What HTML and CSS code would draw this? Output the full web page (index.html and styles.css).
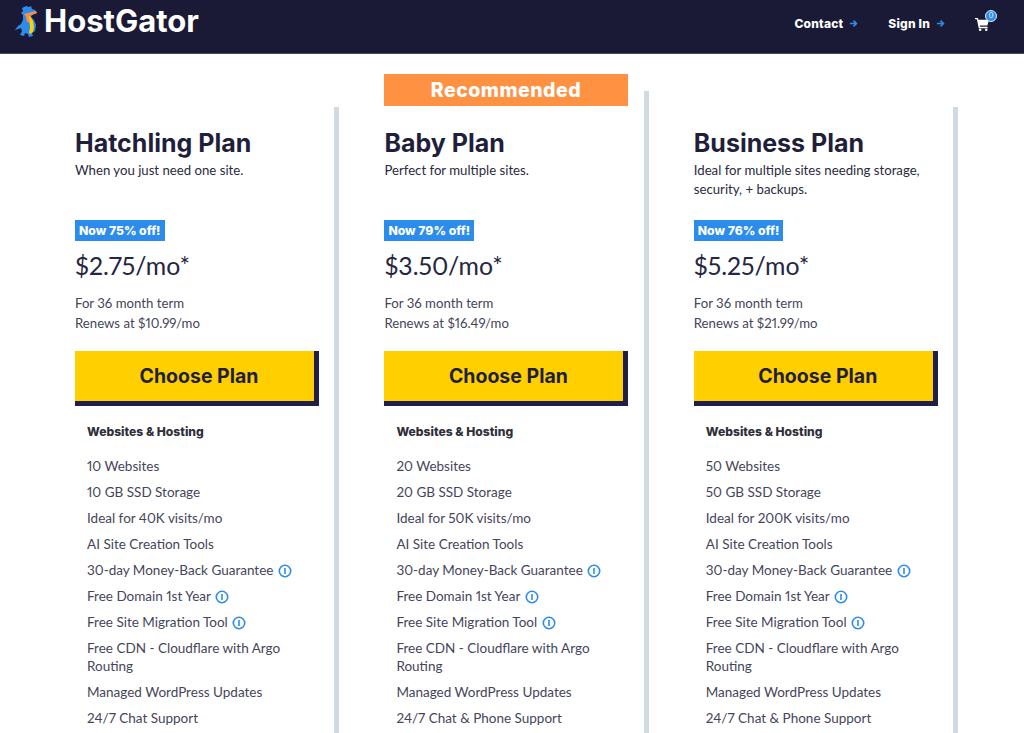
FILE: index.html
```html
<!DOCTYPE html>
<html lang="en">
<head>
<meta charset="utf-8">
<title>HostGator Plans</title>
<link rel="stylesheet" href="styles.css">
</head>
<body>
<header class="topbar">
  <a class="logo">
    <svg class="gator" viewBox="0 0 24 33" width="24" height="33" aria-hidden="true">
      <path d="M11 1l3 1 2-1 1 3 3 1 2 3-5 2-1 2 3 3 2 5-1 6-3 2 1 3-4 1-1-3-3-1-1 3-4-1 2-4-1-3-3 1-3 1 3-4 3-2 2-4 0-5-2-2 2-2-1-3 2-1z" fill="#2b8cec"/>
      <path d="M12 12l3-1 3 5 1 6-1 5-3 2-1-2c2-4 1-10-2-15z" fill="#ffcf00"/>
      <path d="M9 9l12-3 1 2-8 3 1 6-3 0-1-5z" fill="#ff8c42"/>
    </svg>
    <span class="wordmark">HostGator</span>
  </a>
  <nav class="topnav">
    <a class="navlink">Contact <svg class="arrow" viewBox="0 0 10 10" width="9" height="9"><path d="M1 5h7M5 1.800l3.200 3.200L5 8.200" fill="none" stroke="#2b8cec" stroke-width="1.800"/></svg></a>
    <a class="navlink">Sign In <svg class="arrow" viewBox="0 0 10 10" width="9" height="9"><path d="M1 5h7M5 1.800l3.200 3.200L5 8.200" fill="none" stroke="#2b8cec" stroke-width="1.800"/></svg></a>
    <a class="cart">
      <svg viewBox="0 0 16 16" width="15" height="15"><path d="M0 2h3l.6 2H15l-1.800 6H5l.4 1.500h8v1.500H4L2 3.500H0z" fill="#fff"/><circle cx="5.500" cy="14.600" r="1.400" fill="#fff"/><circle cx="12" cy="14.600" r="1.400" fill="#fff"/></svg>
      <span class="cart-badge">0</span>
    </a>
  </nav>
</header>

<main class="plans">
  <section class="plan">
    <h2 class="plan-name">Hatchling Plan</h2>
    <p class="plan-desc">When you just need one site.</p>
    <span class="discount">Now 75% off!</span>
    <p class="price">$2.75/mo*</p>
    <p class="term">For 36 month term<br>Renews at $10.99/mo</p>
    <a class="choose">Choose Plan</a>
    <div class="features">
      <h3 class="features-title">Websites &amp; Hosting</h3>
      <ul class="feature-list">
        <li>10 Websites</li>
        <li>10 GB SSD Storage</li>
        <li>Ideal for 40K visits/mo</li>
        <li>AI Site Creation Tools</li>
        <li>30-day Money-Back Guarantee <svg class="info" viewBox="0 0 14 14"><circle cx="7" cy="7" r="5.700" fill="none" stroke="#2b8cec" stroke-width="1.600"/><path d="M7 4v6" stroke="#2b8cec" stroke-width="1.600"/></svg></li>
        <li>Free Domain 1st Year <svg class="info" viewBox="0 0 14 14"><circle cx="7" cy="7" r="5.700" fill="none" stroke="#2b8cec" stroke-width="1.600"/><path d="M7 4v6" stroke="#2b8cec" stroke-width="1.600"/></svg></li>
        <li>Free Site Migration Tool <svg class="info" viewBox="0 0 14 14"><circle cx="7" cy="7" r="5.700" fill="none" stroke="#2b8cec" stroke-width="1.600"/><path d="M7 4v6" stroke="#2b8cec" stroke-width="1.600"/></svg></li>
        <li>Free CDN - Cloudflare with Argo Routing</li>
        <li>Managed WordPress Updates</li>
        <li>24/7 Chat Support</li>
      </ul>
    </div>
  </section>

  <section class="plan plan-featured">
    <div class="ribbon">Recommended</div>
    <h2 class="plan-name">Baby Plan</h2>
    <p class="plan-desc">Perfect for multiple sites.</p>
    <span class="discount">Now 79% off!</span>
    <p class="price">$3.50/mo*</p>
    <p class="term">For 36 month term<br>Renews at $16.49/mo</p>
    <a class="choose">Choose Plan</a>
    <div class="features">
      <h3 class="features-title">Websites &amp; Hosting</h3>
      <ul class="feature-list">
        <li>20 Websites</li>
        <li>20 GB SSD Storage</li>
        <li>Ideal for 50K visits/mo</li>
        <li>AI Site Creation Tools</li>
        <li>30-day Money-Back Guarantee <svg class="info" viewBox="0 0 14 14"><circle cx="7" cy="7" r="5.700" fill="none" stroke="#2b8cec" stroke-width="1.600"/><path d="M7 4v6" stroke="#2b8cec" stroke-width="1.600"/></svg></li>
        <li>Free Domain 1st Year <svg class="info" viewBox="0 0 14 14"><circle cx="7" cy="7" r="5.700" fill="none" stroke="#2b8cec" stroke-width="1.600"/><path d="M7 4v6" stroke="#2b8cec" stroke-width="1.600"/></svg></li>
        <li>Free Site Migration Tool <svg class="info" viewBox="0 0 14 14"><circle cx="7" cy="7" r="5.700" fill="none" stroke="#2b8cec" stroke-width="1.600"/><path d="M7 4v6" stroke="#2b8cec" stroke-width="1.600"/></svg></li>
        <li>Free CDN - Cloudflare with Argo Routing</li>
        <li>Managed WordPress Updates</li>
        <li>24/7 Chat &amp; Phone Support</li>
      </ul>
    </div>
  </section>

  <section class="plan">
    <h2 class="plan-name">Business Plan</h2>
    <p class="plan-desc">Ideal for multiple sites needing storage, security, + backups.</p>
    <span class="discount">Now 76% off!</span>
    <p class="price">$5.25/mo*</p>
    <p class="term">For 36 month term<br>Renews at $21.99/mo</p>
    <a class="choose">Choose Plan</a>
    <div class="features">
      <h3 class="features-title">Websites &amp; Hosting</h3>
      <ul class="feature-list">
        <li>50 Websites</li>
        <li>50 GB SSD Storage</li>
        <li>Ideal for 200K visits/mo</li>
        <li>AI Site Creation Tools</li>
        <li>30-day Money-Back Guarantee <svg class="info" viewBox="0 0 14 14"><circle cx="7" cy="7" r="5.700" fill="none" stroke="#2b8cec" stroke-width="1.600"/><path d="M7 4v6" stroke="#2b8cec" stroke-width="1.600"/></svg></li>
        <li>Free Domain 1st Year <svg class="info" viewBox="0 0 14 14"><circle cx="7" cy="7" r="5.700" fill="none" stroke="#2b8cec" stroke-width="1.600"/><path d="M7 4v6" stroke="#2b8cec" stroke-width="1.600"/></svg></li>
        <li>Free Site Migration Tool <svg class="info" viewBox="0 0 14 14"><circle cx="7" cy="7" r="5.700" fill="none" stroke="#2b8cec" stroke-width="1.600"/><path d="M7 4v6" stroke="#2b8cec" stroke-width="1.600"/></svg></li>
        <li>Free CDN - Cloudflare with Argo Routing</li>
        <li>Managed WordPress Updates</li>
        <li>24/7 Chat &amp; Phone Support</li>
      </ul>
    </div>
  </section>
</main>
</body>
</html>
```
FILE: styles.css
```css
* { box-sizing: border-box; }
html, body { height: 100%; }
body {
  margin: 0;
  display: flex;
  flex-direction: column;
  overflow: hidden;
  background: #fff;
  color: #1f1f3c;
  font-family: "Lato", "Liberation Sans", sans-serif;
  font-variant-numeric: proportional-nums;
}
.topbar {
  flex: none;
  height: 54px;
  background: #1a1a36;
  border-bottom: 1px solid #4a4a60;
  display: flex;
  justify-content: space-between;
  align-items: flex-start;
  padding: 4px 34px 0 15px;
}
.logo { display: flex; align-items: center; gap: 5px; }
.gator { display: block; }
.wordmark {
  color: #fff;
  font-family: "Inter", sans-serif;
  font-weight: 700;
  font-size: 31px;
  letter-spacing: 0;
  line-height: 34px;
}
.topnav { display: flex; align-items: center; gap: 30px; padding-top: 12px; }
.navlink {
  color: #fff;
  font-family: "Inter", sans-serif;
  font-weight: 800;
  font-size: 12px;
  letter-spacing: 0.2px;
  display: flex;
  align-items: center;
  gap: 6px;
}
.cart { position: relative; display: block; height: 15px; }
.cart svg { display: block; }
.cart-badge {
  position: absolute;
  left: 10px;
  top: -6px;
  width: 12px;
  height: 12px;
  border-radius: 50%;
  background: #2b8cec;
  border: 1.500px solid #dbe9f8;
  color: #fff;
  font-size: 7px;
  line-height: 9px;
  text-align: center;
}
.plans {
  flex: 1;
  min-height: 0;
  display: grid;
  grid-template-columns: 309.400px 309.400px 309.200px;
  padding: 53px 0 0 30px;
  margin: 0;
}
.plan {
  position: relative;
  border-right: 5px solid #cfdae2;
  padding: 21px 16px 0 45px;
}
.plan-featured {
  margin-top: -16px;
  padding-top: 37px;
}
.ribbon {
  position: absolute;
  left: 44.600px;
  top: -17px;
  width: 244px;
  height: 32px;
  background: #ff9143;
  color: #fff;
  font-family: "Inter", sans-serif;
  font-weight: 800;
  font-size: 19.500px;
  line-height: 32px;
  text-align: center;
  letter-spacing: 0.5px;
}
.plan-name {
  margin: 0;
  font-size: 25px;
  line-height: 30px;
  font-weight: 700;
  font-family: "Inter", sans-serif;
  color: #1f1f3c;
}
.plan-desc {
  margin: 0;
  height: 61px;
  padding-top: 3px;
  font-size: 13.200px;
  line-height: 19px;
  color: #2a2a40;
}
.discount {
  display: inline-block;
  background: #2b8cec;
  color: #fff;
  font-family: "Inter", sans-serif;
  font-weight: 800;
  font-size: 12.200px;
  line-height: 21px;
  padding: 0 4px;
}
.price {
  margin: 10px 0 0;
  font-size: 24.800px;
  line-height: 30px;
  font-weight: 400;
  color: #26263f;
}
.term {
  margin: 12px 0 0;
  font-size: 13.200px;
  line-height: 20px;
  color: #45455a;
}
.choose {
  display: block;
  margin-top: 18px;
  width: 244px;
  height: 55px;
  padding-left: 9px;
  background: #ffcf00;
  border-right: 5px solid #1f1f4a;
  border-bottom: 5px solid #1f1f4a;
  color: #1f1f3c;
  font-family: "Inter", sans-serif;
  font-weight: 700;
  font-size: 19.500px;
  line-height: 50px;
  text-align: center;
}
.features { padding: 17px 0 0 12px; }
.features-title {
  margin: 0 0 12px;
  font-family: "Inter", sans-serif;
  font-size: 12.100px;
  line-height: 18px;
  font-weight: 800;
  color: #2f2f3a;
}
.feature-list {
  list-style: none;
  margin: 0;
  padding: 0;
  width: 215px;
}
.feature-list li {
  padding: 4px 0;
  font-size: 13.500px;
  line-height: 18px;
  color: #45455a;
}
.info {
  width: 14px;
  height: 14px;
  vertical-align: -3px;
  margin-left: 1px;
}
```
